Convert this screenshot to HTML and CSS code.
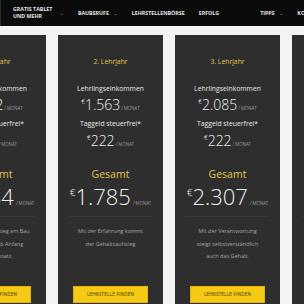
FILE: index.html
```html
<!DOCTYPE HTML>
<html>
<head>
<meta http-equiv="Content-Type" content="text/html; charset=utf-8">
<title>Lehrlingseinkommen</title>
<link rel="stylesheet" href="styles.css">
</head>
<body>

<div id="header">
	<div class="logo"></div>
	<ul id="nav">
		<li class="twoLine"><span>Gratis Tablet<br>und mehr</span><span class="caret">&#8964;</span></li>
		<li>Bauberufe <span class="caret">&#8964;</span></li>
		<li>Lehrstellenbörse</li>
		<li>Erfolg</li>
		<li class="wide">Tipps <span class="caret">&#8964;</span></li>
		<li>Kontakt</li>
	</ul>
</div>

<div id="strip"></div>

<div id="cards">

	<div class="card">
		<div class="year">1. Lehrjahr</div>
		<div class="label">Lehrlingseinkommen</div>
		<div class="amount"><sup>€</sup>1.162<span class="per">/ MONAT</span></div>
		<div class="label">Taggeld steuerfrei*</div>
		<div class="amount"><sup>€</sup>222<span class="per">/ MONAT</span></div>
		<div class="totalLabel">Gesamt</div>
		<div class="total"><sup>€</sup>1.384<span class="per">/ MONAT</span></div>
		<div class="desc">Schon beim Einstieg am Bau<br>lohnt es sich ab Anfang<br>deinen Einsatz.</div>
		<div class="btnRow"><button class="findBtn">Lehrstelle finden</button></div>
	</div>

	<div class="card">
		<div class="year">2. Lehrjahr</div>
		<div class="label">Lehrlingseinkommen</div>
		<div class="amount"><sup>€</sup>1.563<span class="per">/ MONAT</span></div>
		<div class="label">Taggeld steuerfrei*</div>
		<div class="amount"><sup>€</sup>222<span class="per">/ MONAT</span></div>
		<div class="totalLabel">Gesamt</div>
		<div class="total"><sup>€</sup>1.785<span class="per">/ MONAT</span></div>
		<div class="desc">Mit der Erfahrung kommt<br>der Gehaltsaufstieg</div>
		<div class="btnRow"><button class="findBtn">Lehrstelle finden</button></div>
	</div>

	<div class="card">
		<div class="year">3. Lehrjahr</div>
		<div class="label">Lehrlingseinkommen</div>
		<div class="amount"><sup>€</sup>2.085<span class="per">/ MONAT</span></div>
		<div class="label">Taggeld steuerfrei*</div>
		<div class="amount"><sup>€</sup>222<span class="per">/ MONAT</span></div>
		<div class="totalLabel">Gesamt</div>
		<div class="total"><sup>€</sup>2.307<span class="per">/ MONAT</span></div>
		<div class="desc">Mit der Verantwortung<br>steigt selbstverständlich<br>auch das Gehalt.</div>
		<div class="btnRow"><button class="findBtn">Lehrstelle finden</button></div>
	</div>

	<div class="card">
		<div class="year">4. Lehrjahr</div>
		<div class="label">Lehrlingseinkommen</div>
		<div class="amount"><sup>€</sup>2.611<span class="per">/ MONAT</span></div>
		<div class="label">Taggeld steuerfrei*</div>
		<div class="amount"><sup>€</sup>222<span class="per">/ MONAT</span></div>
		<div class="totalLabel">Gesamt</div>
		<div class="total"><sup>€</sup>2.833<span class="per">/ MONAT</span></div>
		<div class="desc">Am Ende der Lehre bist du<br>ein echter Profi.</div>
		<div class="btnRow"><button class="findBtn">Lehrstelle finden</button></div>
	</div>

</div>

</body>
</html>
```

FILE: styles.css
```css
@charset "utf-8";
/* Lehrlingseinkommen */

body{
	margin:0;
	font-family:"Open Sans", "DejaVu Sans", sans-serif;
	background-color:#f3f3f3;
	overflow:hidden;
}

#header{
	display:flex;
	height:26px;
	background-color:#0b0b0b;
}

.logo{
	width:11px;
	border-right:1px solid #2a2a2a;
}

#nav{
	display:flex;
	align-items:center;
	gap:14px;
	margin:0;
	padding:0 0 0 12px;
	list-style:none;
	white-space:nowrap;
}

#nav li{
	font-size:5.3px;
	font-weight:bold;
	text-transform:uppercase;
	color:#e4e4e4;
	line-height:7px;
}

#nav li.twoLine{
	display:flex;
	align-items:center;
}

#nav li.wide{
	margin-left:27px;
}

.caret{
	color:#999;
	font-weight:normal;
	margin-left:3px;
}

.twoLine .caret{
	margin-left:7px;
}

#strip{
	height:9px;
}

#cards{
	display:flex;
	gap:12px;
	margin-left:-59px;
}

.card{
	flex:0 0 105px;
	height:280px;
	background-color:#2e2e2e;
	text-align:center;
	color:#eee;
	padding-top:22px;
	box-sizing:border-box;
}

.year{
	font-size:6.8px;
	line-height:10px;
	color:#e2c44c;
}

.label{
	font-size:6.8px;
	line-height:10px;
	color:#e8e8e8;
}

.year + .label{
	margin-top:17px;
}

.amount{
	font-size:14px;
	line-height:14px;
	font-weight:300;
	margin:4px 0 7px;
}

.amount + .label + .amount{
	margin:5px 0 0;
}

sup{
	font-size:0.45em;
	line-height:0;
	vertical-align:0.9em;
}

.per{
	font-size:4.5px;
	line-height:0;
	color:#cfcfcf;
	margin-left:1px;
}

.totalLabel{
	margin-top:19px;
	font-size:10.5px;
	line-height:14px;
	color:#e2c44c;
}

.total{
	font-size:22px;
	line-height:26px;
	font-weight:300;
	margin-top:2px;
}

.total .per{
	margin-left:2px;
}

.desc{
	margin:7px 10px 0;
	padding-top:8px;
	border-top:1px solid #373737;
	height:38px;
	font-size:5.5px;
	line-height:12.5px;
	color:#a5a5a5;
}

.btnRow{
	margin-top:16px;
}

.findBtn{
	width:75px;
	height:17px;
	padding:0;
	border:1px solid #e0b40c;
	background-color:#f6c915;
	font-family:"Open Sans", sans-serif;
	font-size:4.6px;
	text-transform:uppercase;
	color:#3a3200;
	letter-spacing:0.2px;
}
```
